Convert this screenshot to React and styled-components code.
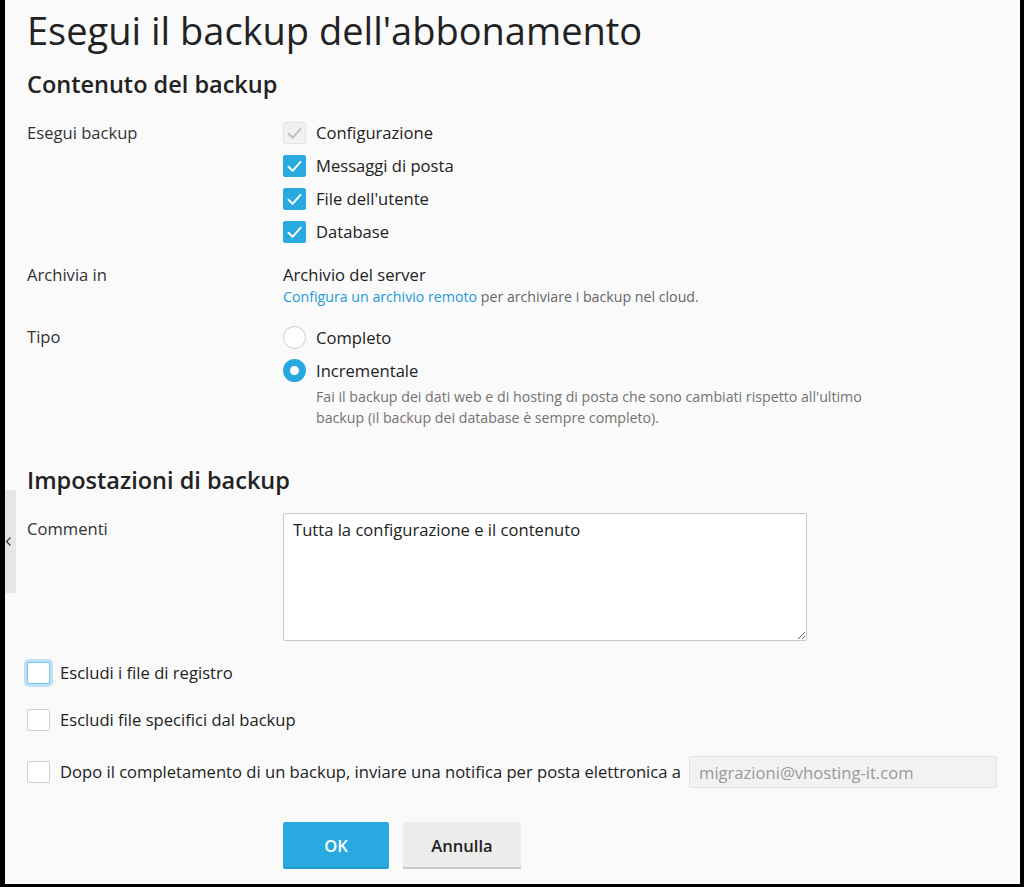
import React from "react";
import styled, { createGlobalStyle } from "styled-components";

const GlobalStyle = createGlobalStyle`
  html, body { margin: 0; padding: 0; background: #000; }
  body { font-family: "Open Sans", "Noto Sans", sans-serif; color: #222; }
  * { box-sizing: border-box; }
`;

const Frame = styled.div`
  position: relative;
  height: 887px;
  background: #fafafa;
  border-left: 5px solid #000;
  border-right: 4px solid #000;
  border-bottom: 3px solid #000;
  padding: 6px 0 0 22px;
  overflow: hidden;
`;

const SideTab = styled.div`
  position: absolute;
  left: 0;
  top: 490px;
  width: 11px;
  height: 103px;
  background: #e6e6e6;
  border-radius: 0 3px 3px 0;
  display: flex;
  align-items: center;
`;

const Title = styled.h1`
  margin: 0;
  font-size: 38px;
  font-weight: 400;
  line-height: 48px;
  color: #222;
`;

const SectionTitle = styled.h2`
  margin: ${(p) => p.$top}px 0 0;
  font-size: 23.5px;
  font-weight: 600;
  line-height: 28px;
  color: #222;
`;

const FormRow = styled.div`
  display: grid;
  grid-template-columns: 256px 1fr;
  margin-top: ${(p) => p.$top}px;
`;

const Label = styled.div`
  font-size: 16.6px;
  line-height: 22px;
  color: #333;
`;

const OptionList = styled.div`
  display: flex;
  flex-direction: column;
  gap: ${(p) => p.$gap}px;
`;

const Option = styled.label`
  display: flex;
  align-items: center;
  gap: 10px;
  font-size: 16.6px;
  line-height: 22px;
  color: #222;
`;

const Box = styled.span`
  flex: none;
  width: 23px;
  height: 22px;
  border-radius: 2px;
  display: flex;
  align-items: center;
  justify-content: center;
  background: ${(p) => (p.$disabled ? "#f1f1f1" : p.$checked ? "#28a9e0" : "#fff")};
  border: 1px solid
    ${(p) => (p.$disabled ? "#e4e4e4" : p.$checked ? "#28a9e0" : p.$focus ? "#7cc3ea" : "#cfcfcf")};
  box-shadow: ${(p) => (p.$focus ? "0 0 0 3px #bde2f6" : "none")};
`;

const Radio = styled.span`
  flex: none;
  width: 23px;
  height: 23px;
  border-radius: 50%;
  background: #fff;
  border: ${(p) => (p.$checked ? "7.5px solid #28a9e0" : "1.5px solid #cdcdcd")};
`;

const Value = styled.div`
  font-size: 16.6px;
  line-height: 22px;
  color: #222;
`;

const Hint = styled.div`
  font-size: 14.2px;
  line-height: 21px;
  color: #666;
`;

const Link = styled.a`
  color: #1f9ad6;
  text-decoration: none;
`;

const Description = styled.div`
  margin-top: 4px;
  padding-left: 33px;
  width: 598px;
  font-size: 14.2px;
  line-height: 21px;
  color: #737373;
`;

const TextArea = styled.textarea`
  display: block;
  width: 524px;
  height: 128px;
  margin-top: -5px;
  padding: 5px 9px;
  border: 1px solid #c8c8c8;
  border-radius: 2px;
  background: #fff;
  font-family: "Open Sans", sans-serif;
  font-size: 16.6px;
  line-height: 22px;
  color: #222;
  outline: none;
`;

const CheckRow = styled.label`
  display: flex;
  align-items: center;
  gap: 10px;
  margin-top: ${(p) => p.$top}px;
  font-size: 16.6px;
  line-height: 22px;
  color: #222;
`;

const EmailInput = styled.input`
  width: 308px;
  height: 32px;
  margin-left: -2px;
  padding: 0 9px;
  border: 1px solid #e3e3e3;
  border-radius: 2px;
  background: #f2f2f2;
  font-family: "Open Sans", sans-serif;
  font-size: 16.6px;
  color: #999;
  outline: none;
`;

const Buttons = styled.div`
  display: flex;
  gap: 14px;
  margin-top: 34px;
  padding-left: 256px;
`;

const Button = styled.button`
  height: 47px;
  width: ${(p) => p.$w}px;
  border: 0;
  border-radius: 2px;
  font-family: "Open Sans", sans-serif;
  font-size: 16.6px;
  font-weight: 600;
  cursor: pointer;
  background: ${(p) => (p.$primary ? "#28a9e0" : "#ececec")};
  color: ${(p) => (p.$primary ? "#fff" : "#222")};
  box-shadow: ${(p) => (p.$primary ? "inset 0 -2px 0 rgba(0,0,0,0.08)" : "inset 0 -2px 0 #c9c9c9")};
`;

const Check = ({ color = "#fff" }) => (
  <svg width="15" height="13" viewBox="0 0 15 13" fill="none">
    <path d="M1.5 6.8 L5.6 10.8 L13.5 1.8" stroke={color} strokeWidth="2" strokeLinecap="round" strokeLinejoin="round" />
  </svg>
);

const Chevron = () => (
  <svg width="7" height="11" viewBox="0 0 7 11" fill="none">
    <path d="M5.5 1.5 L1.5 5.5 L5.5 9.5" stroke="#444" strokeWidth="1.4" />
  </svg>
);

export default function App() {
  return (
    <>
      <GlobalStyle />
      <Frame>
        <SideTab>
          <Chevron />
        </SideTab>
        <Title>Esegui il backup dell'abbonamento</Title>
        <SectionTitle $top={16}>Contenuto del backup</SectionTitle>

        <FormRow $top={24}>
          <Label>Esegui backup</Label>
          <OptionList $gap={11}>
            <Option>
              <Box $checked $disabled>
                <Check color="#c2c2c2" />
              </Box>
              Configurazione
            </Option>
            <Option>
              <Box $checked>
                <Check />
              </Box>
              Messaggi di posta
            </Option>
            <Option>
              <Box $checked>
                <Check />
              </Box>
              File dell'utente
            </Option>
            <Option>
              <Box $checked>
                <Check />
              </Box>
              Database
            </Option>
          </OptionList>
        </FormRow>

        <FormRow $top={21}>
          <Label>Archivia in</Label>
          <div>
            <Value>Archivio del server</Value>
            <Hint>
              <Link href="#">Configura un archivio remoto</Link> per archiviare i backup nel cloud.
            </Hint>
          </div>
        </FormRow>

        <FormRow $top={19}>
          <Label>Tipo</Label>
          <div>
            <OptionList $gap={10}>
              <Option>
                <Radio />
                Completo
              </Option>
              <Option>
                <Radio $checked />
                Incrementale
              </Option>
            </OptionList>
            <Description>
              Fai il backup dei dati web e di hosting di posta che sono cambiati rispetto all'ultimo backup (il
              backup dei database è sempre completo).
            </Description>
          </div>
        </FormRow>

        <SectionTitle $top={38}>Impostazioni di backup</SectionTitle>

        <FormRow $top={24}>
          <Label>Commenti</Label>
          <TextArea defaultValue="Tutta la configurazione e il contenuto" />
        </FormRow>

        <CheckRow $top={21}>
          <Box $focus />
          Escludi i file di registro
        </CheckRow>
        <CheckRow $top={25}>
          <Box />
          Escludi file specifici dal backup
        </CheckRow>
        <CheckRow $top={25}>
          <Box />
          Dopo il completamento di un backup, inviare una notifica per posta elettronica a
          <EmailInput readOnly value="migrazioni@vhosting-it.com" />
        </CheckRow>

        <Buttons>
          <Button $primary $w={106}>OK</Button>
          <Button $w={118}>Annulla</Button>
        </Buttons>
      </Frame>
    </>
  );
}
